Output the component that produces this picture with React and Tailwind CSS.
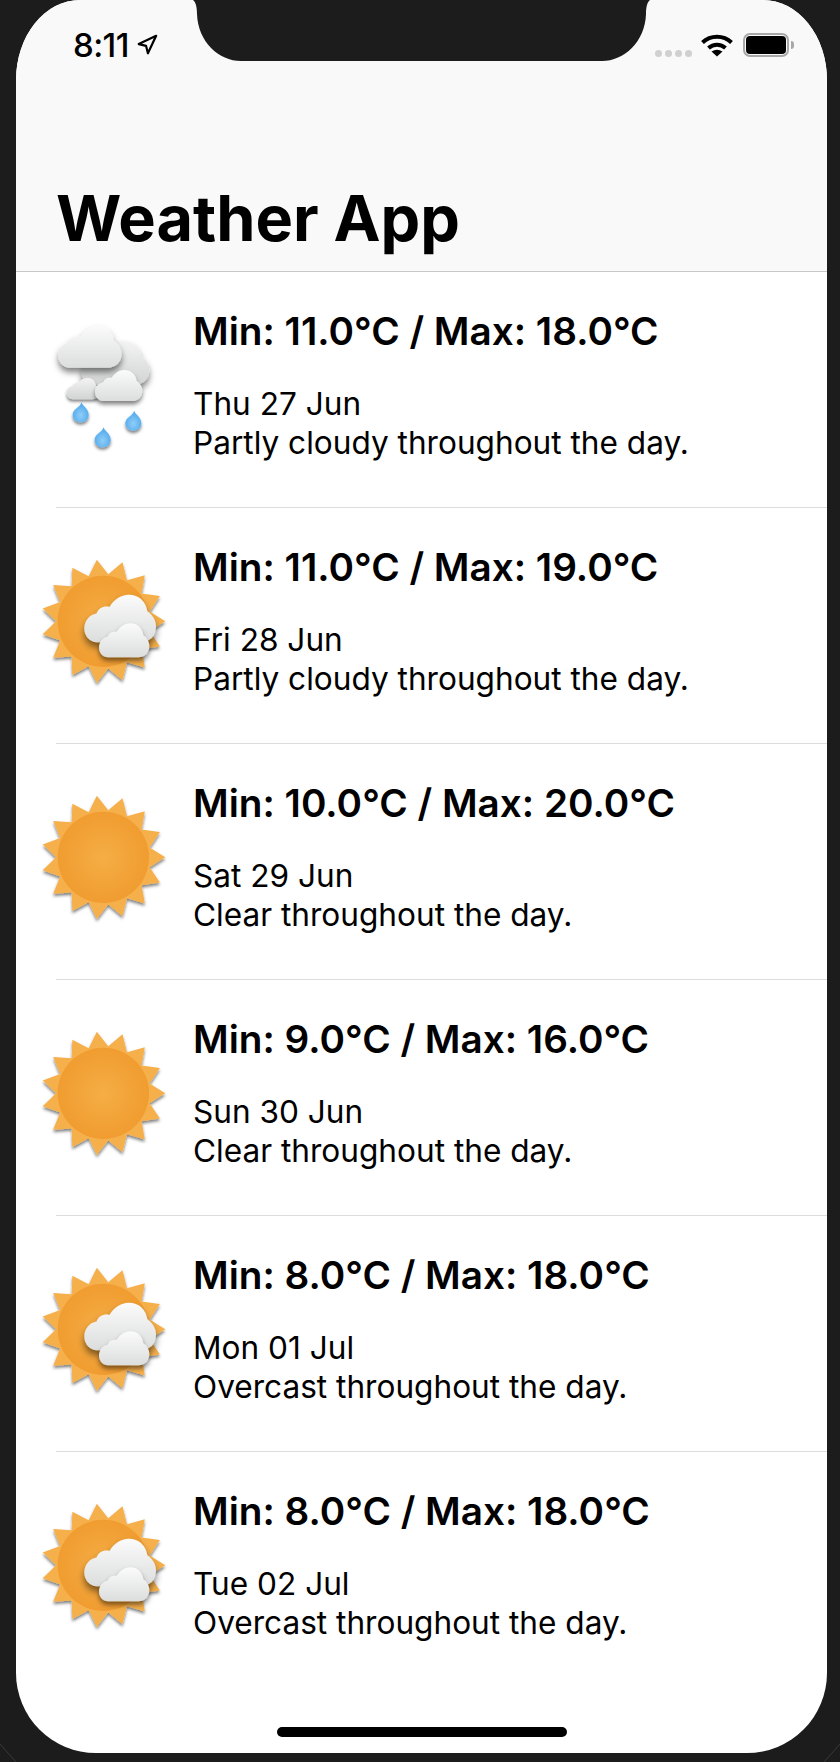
import { Navigation } from 'lucide-react'

const days = [
  { temp: 'Min: 11.0°C / Max: 18.0°C', date: 'Thu 27 Jun', text: 'Partly cloudy throughout the day.', icon: 'rain' },
  { temp: 'Min: 11.0°C / Max: 19.0°C', date: 'Fri 28 Jun', text: 'Partly cloudy throughout the day.', icon: 'cloudy' },
  { temp: 'Min: 10.0°C / Max: 20.0°C', date: 'Sat 29 Jun', text: 'Clear throughout the day.', icon: 'sun' },
  { temp: 'Min: 9.0°C / Max: 16.0°C', date: 'Sun 30 Jun', text: 'Clear throughout the day.', icon: 'sun' },
  { temp: 'Min: 8.0°C / Max: 18.0°C', date: 'Mon 01 Jul', text: 'Overcast throughout the day.', icon: 'cloudy' },
  { temp: 'Min: 8.0°C / Max: 18.0°C', date: 'Tue 02 Jul', text: 'Overcast throughout the day.', icon: 'cloudy' },
]

// 15 pointed star behind the sun disc
const starPoints = Array.from({ length: 30 }, (_, i) => {
  const r = i % 2 === 0 ? 186 : 142
  const a = (i * 12 * Math.PI) / 180
  return `${220 + r * Math.cos(a)},${232 - r * Math.sin(a)}`
}).join(' ')

function Defs() {
  return (
    <svg className="absolute h-0 w-0" aria-hidden="true">
      <defs>
        <linearGradient id="cloudFill" x1="0" y1="0" x2="0" y2="1">
          <stop offset="0" stopColor="#fbfbfb" />
          <stop offset="1" stopColor="#dcdddd" />
        </linearGradient>
        <linearGradient id="backCloudFill" x1="0" y1="0" x2="0" y2="1">
          <stop offset="0" stopColor="#f4f4f4" />
          <stop offset="1" stopColor="#d2d3d3" />
        </linearGradient>
        <radialGradient id="sunFill">
          <stop offset="0" stopColor="#f5ae45" />
          <stop offset="1" stopColor="#f09c30" />
        </radialGradient>
        <radialGradient id="dropFill" cx="0.5" cy="0.65" r="0.6">
          <stop offset="0" stopColor="#8fcdf7" />
          <stop offset="1" stopColor="#4fa8ec" />
        </radialGradient>
        <filter id="softShadow" x="-20%" y="-20%" width="140%" height="150%">
          <feDropShadow dx="0" dy="7" stdDeviation="5" floodColor="#000000" floodOpacity="0.5" />
        </filter>
      </defs>
    </svg>
  )
}

function Cloud({ x, y, w, h, back }) {
  return (
    <path
      transform={`translate(${x} ${y}) scale(${w / 100} ${h / 66})`}
      d="M18 66 C7 66 0 57 0 47 C0 36 7 28 17 26 C20 19 27 15 35 17 C41 7 51 0 62 0 C76 0 86 9 88 23 C95 28 100 35 100 44 C100 57 91 66 78 66 Z"
      fill={back ? 'url(#backCloudFill)' : 'url(#cloudFill)'}
      filter="url(#softShadow)"
    />
  )
}

function Drop({ x, y }) {
  return (
    <path
      transform={`translate(${x} ${y})`}
      d="M3 -36 C5 -24 24 -18 24 2 C24 15 13 24 0 24 C-13 24 -24 15 -24 2 C-24 -16 -4 -18 3 -36 Z"
      fill="url(#dropFill)"
      filter="url(#softShadow)"
    />
  )
}

function Sun() {
  return (
    <>
      <polygon points={starPoints} fill="#f6b04c" filter="url(#softShadow)" />
      <circle cx="220" cy="232" r="137" fill="url(#sunFill)" />
    </>
  )
}

function WeatherIcon({ type }) {
  return (
    <svg viewBox="0 0 480 450" className="mt-[36px] h-[150px] w-[160px] shrink-0">
      {type === 'rain' && (
        <g transform="translate(0 9)">
          <Cloud x={155} y={90} w={203} h={132} back />
          <Cloud x={110} y={200} w={100} h={65} back />
          <Cloud x={85} y={45} w={190} h={125} />
          <Cloud x={195} y={177} w={142} h={93} />
          <Drop x={152} y={310} />
          <Drop x={310} y={335} />
          <Drop x={218} y={385} />
        </g>
      )}
      {type !== 'rain' && <Sun />}
      {type === 'cloudy' && (
        <>
          <Cloud x={163} y={152} w={215} h={143} />
          <Cloud x={207} y={238} w={151} h={102} />
        </>
      )}
    </svg>
  )
}

function Notch() {
  return (
    <svg viewBox="0 0 457 62" className="absolute left-[177px] top-0 h-[62px] w-[457px]">
      <path
        d="M0 0 C3 2 4 8 4 14 C5 42 26 61 48 61 L409 61 C431 61 452 42 453 14 C453 8 454 2 457 0 Z"
        fill="#1c1c1c"
      />
    </svg>
  )
}

function WifiIcon() {
  return (
    <svg viewBox="0 0 34 24" className="h-6 w-[34px]">
      <path d="M2.5 9.5 A21 21 0 0 1 31.5 9.5" fill="none" stroke="#000" strokeWidth="4" />
      <path d="M8.5 15 A12.5 12.5 0 0 1 25.5 15" fill="none" stroke="#000" strokeWidth="4" />
      <path d="M17 23.5 L11.5 18.5 Q17 15 22.5 18.5 Z" fill="#000" />
    </svg>
  )
}

function StatusBar() {
  return (
    <div className="flex items-start justify-between pl-[57px] pr-[33px] pt-[33px]">
      <div className="flex items-center gap-[7px]">
        <span className="text-[33px] font-medium leading-6 tracking-[-0.6px]">8:11</span>
        <Navigation size={22} strokeWidth={2.4} color="#000" />
      </div>
      <div className="flex items-end gap-[8px]">
        <div className="flex gap-[3px]">
          <span className="h-[7px] w-[7px] rounded-sm bg-[#d0d0d0]" />
          <span className="h-[7px] w-[7px] rounded-sm bg-[#d0d0d0]" />
          <span className="h-[7px] w-[7px] rounded-sm bg-[#d0d0d0]" />
          <span className="h-[7px] w-[7px] rounded-sm bg-[#d0d0d0]" />
        </div>
        <WifiIcon />
        <div className="ml-[1px] flex items-center gap-[2px]">
          <div className="h-6 w-[46px] rounded-[7px] border-2 border-[#a8a8a8] p-[1px]">
            <div className="h-full w-full rounded-[4px] bg-black" />
          </div>
          <span className="h-2 w-[3px] rounded-r-sm bg-[#a8a8a8]" />
        </div>
      </div>
    </div>
  )
}

function DayRow({ day, last }) {
  return (
    <div>
      <div className="flex h-[235px] pl-[14px]">
        <WeatherIcon type={day.icon} />
        <div className="ml-[3px] pt-[39px]">
          <h2 className="text-[38.7px] font-semibold leading-[40px]">{day.temp}</h2>
          <p className="mt-[33px] text-[31.6px] leading-[39px]">{day.date}</p>
          <p className="text-[31.6px] leading-[39px]">{day.text}</p>
        </div>
      </div>
      {!last && <div className="ml-10 h-px bg-[#dcdcdc]" />}
    </div>
  )
}

export default function App() {
  return (
    <div className="relative h-[1762px] w-[840px] overflow-hidden bg-[#1c1c1c] pl-4 pr-[13px] font-['Inter',sans-serif] text-black">
      <Defs />
      <div className="relative flex h-[1753px] flex-col overflow-hidden rounded-tl-[64px_80px] rounded-tr-[64px_80px] rounded-b-[80px] bg-white">
        <Notch />
        <header className="flex h-[272px] flex-col border-b border-[#c8c8c8] bg-[#f9f9f9]">
          <StatusBar />
          <h1 className="mt-auto pb-[25px] pl-[40px] text-[63px] font-bold leading-[56px]">Weather App</h1>
        </header>
        <main className="flex-1">
          {days.map((day, i) => (
            <DayRow key={day.date} day={day} last={i === days.length - 1} />
          ))}
        </main>
        <div className="mx-auto mb-4 h-[10px] w-[290px] rounded-full bg-black" />
      </div>
      <svg viewBox="0 0 20 20" className="absolute bottom-0 left-0 h-5 w-5">
        <line x1="0" y1="2" x2="16" y2="20" stroke="#3a3a3a" strokeWidth="1" />
      </svg>
      <svg viewBox="0 0 20 20" className="absolute bottom-0 right-0 h-5 w-5">
        <line x1="20" y1="2" x2="4" y2="20" stroke="#3a3a3a" strokeWidth="1" />
      </svg>
    </div>
  )
}
